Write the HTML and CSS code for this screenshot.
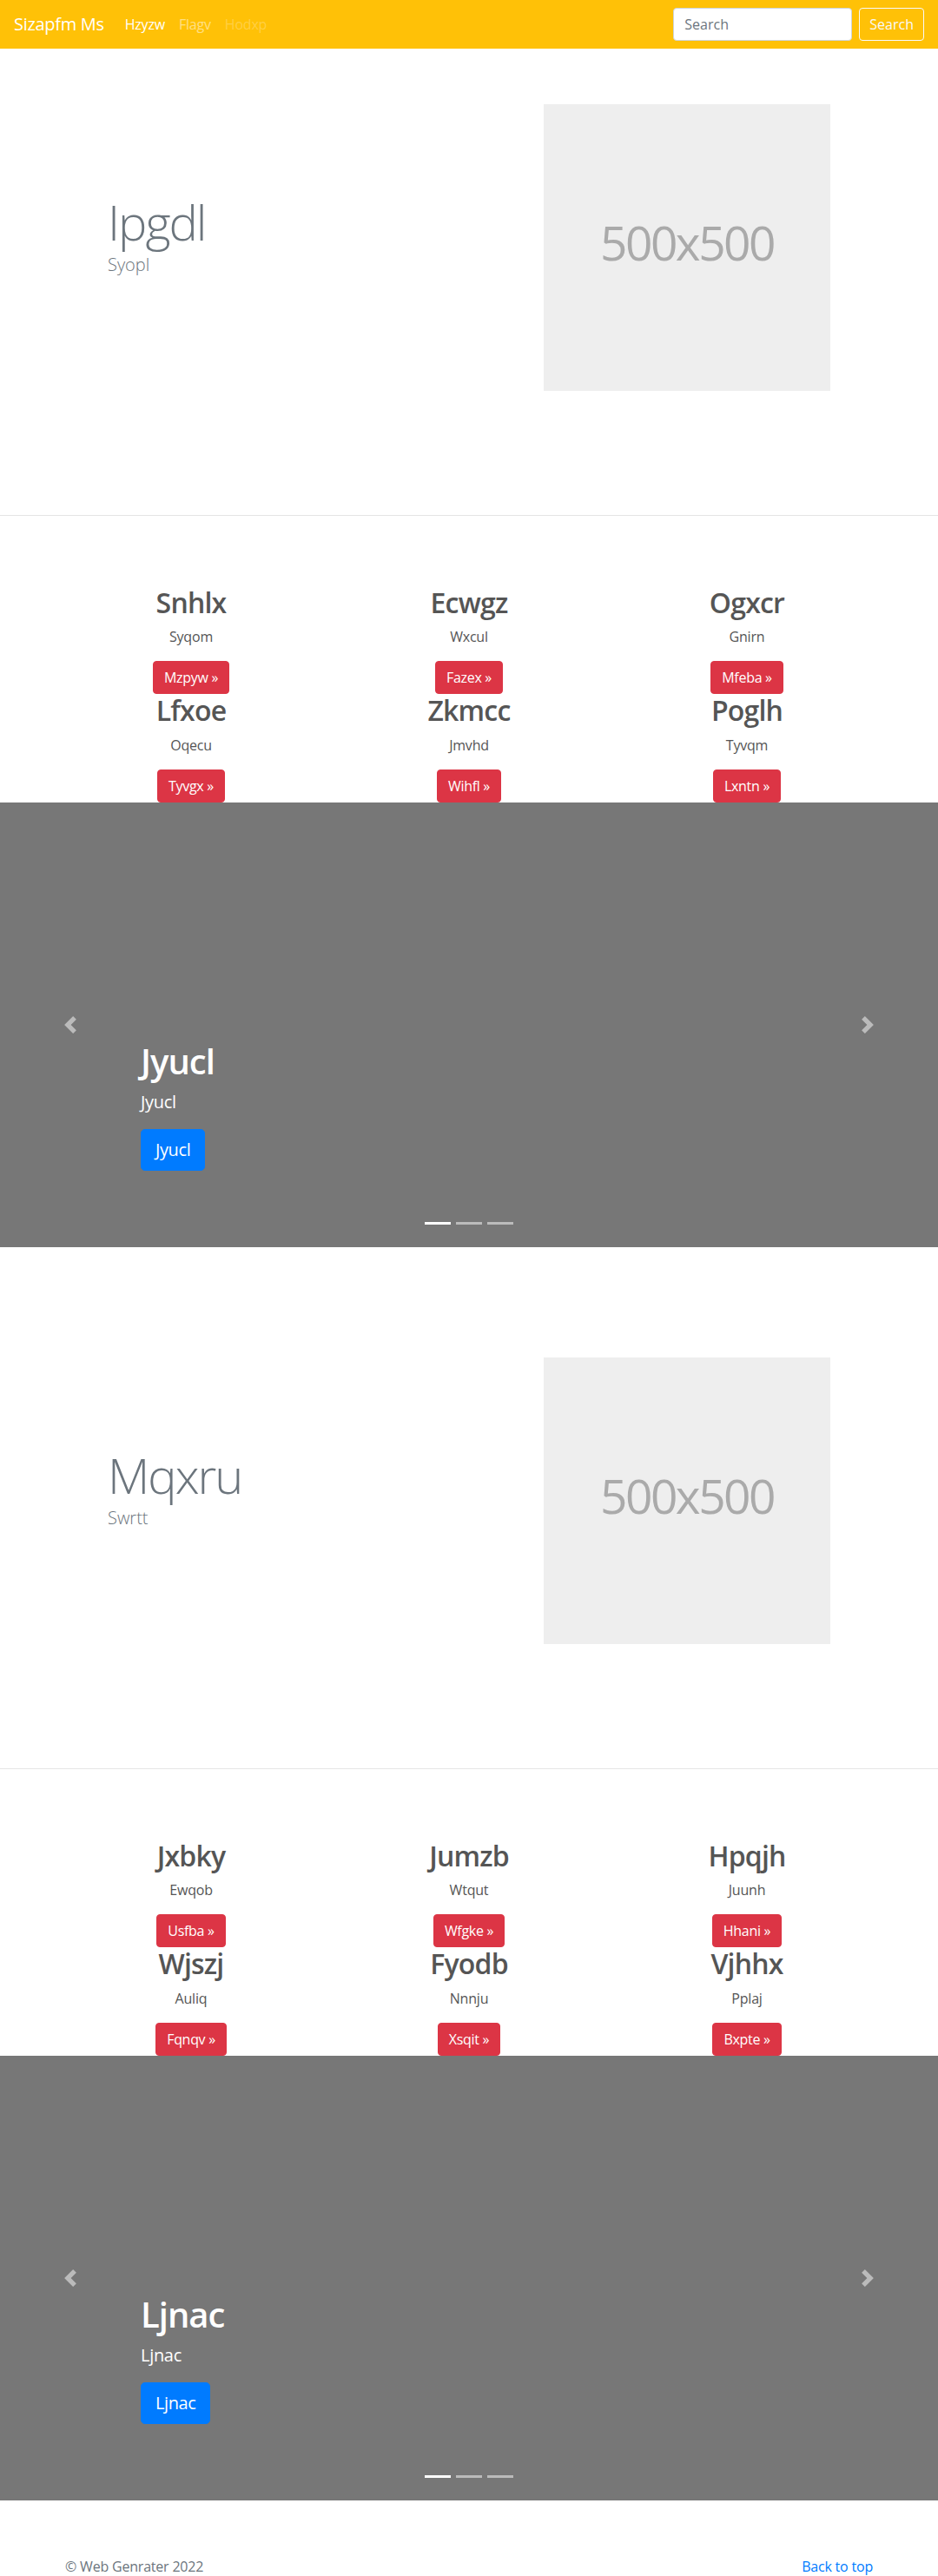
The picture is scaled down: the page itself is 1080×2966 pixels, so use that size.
FILE: index.html
```html
<!DOCTYPE html>
<html lang="en">
<head>
<meta charset="utf-8">
<title>Sizapfm Ms</title>
<link rel="stylesheet" href="styles.css">
</head>
<body>
<nav class="navbar">
  <a class="brand" href="#">Sizapfm Ms</a>
  <ul class="nav-links">
    <li><a class="nav-link active" href="#">Hzyzw</a></li>
    <li><a class="nav-link" href="#">Flagv</a></li>
    <li><a class="nav-link disabled" href="#">Hodxp</a></li>
  </ul>
  <form class="search">
    <input class="search-input" type="text" placeholder="Search">
    <button class="search-btn" type="button">Search</button>
  </form>
</nav>

<section class="hero hero-first">
  <div class="container hero-row">
    <div class="hero-text">
      <h1 class="hero-title">Ipgdl</h1>
      <p class="hero-sub">Syopl</p>
    </div>
    <div class="hero-media"><div class="placeholder">500x500</div></div>
  </div>
</section>

<section class="features">
  <div class="container feature-grid">
    <div class="feature"><h2 class="feature-title">Snhlx</h2><p class="feature-text">Syqom</p><a class="btn-danger" href="#">Mzpyw &raquo;</a></div>
    <div class="feature"><h2 class="feature-title">Ecwgz</h2><p class="feature-text">Wxcul</p><a class="btn-danger" href="#">Fazex &raquo;</a></div>
    <div class="feature"><h2 class="feature-title">Ogxcr</h2><p class="feature-text">Gnirn</p><a class="btn-danger" href="#">Mfeba &raquo;</a></div>
    <div class="feature"><h2 class="feature-title">Lfxoe</h2><p class="feature-text">Oqecu</p><a class="btn-danger" href="#">Tyvgx &raquo;</a></div>
    <div class="feature"><h2 class="feature-title">Zkmcc</h2><p class="feature-text">Jmvhd</p><a class="btn-danger" href="#">Wihfl &raquo;</a></div>
    <div class="feature"><h2 class="feature-title">Poglh</h2><p class="feature-text">Tyvqm</p><a class="btn-danger" href="#">Lxntn &raquo;</a></div>
  </div>
</section>

<section class="carousel">
  <div class="carousel-caption">
    <h1 class="caption-title">Jyucl</h1>
    <p class="caption-text">Jyucl</p>
    <a class="btn-primary-lg" href="#">Jyucl</a>
  </div>
  <a class="carousel-control prev" href="#"><svg class="control-icon" viewBox="0 0 8 8" width="20" height="20"><path fill="#fff" d="M5.25 0l-4 4 4 4 1.5-1.5L4.25 4l2.5-2.5L5.25 0z"/></svg></a>
  <a class="carousel-control next" href="#"><svg class="control-icon" viewBox="0 0 8 8" width="20" height="20"><path fill="#fff" d="M2.75 0l-1.5 1.5L3.75 4l-2.5 2.5L2.75 8l4-4-4-4z"/></svg></a>
  <ol class="indicators"><li class="indicator active"></li><li class="indicator"></li><li class="indicator"></li></ol>
</section>

<section class="hero hero-next">
  <div class="container hero-row">
    <div class="hero-text">
      <h1 class="hero-title">Mqxru</h1>
      <p class="hero-sub">Swrtt</p>
    </div>
    <div class="hero-media"><div class="placeholder">500x500</div></div>
  </div>
</section>

<section class="features">
  <div class="container feature-grid">
    <div class="feature"><h2 class="feature-title">Jxbky</h2><p class="feature-text">Ewqob</p><a class="btn-danger" href="#">Usfba &raquo;</a></div>
    <div class="feature"><h2 class="feature-title">Jumzb</h2><p class="feature-text">Wtqut</p><a class="btn-danger" href="#">Wfgke &raquo;</a></div>
    <div class="feature"><h2 class="feature-title">Hpqjh</h2><p class="feature-text">Juunh</p><a class="btn-danger" href="#">Hhani &raquo;</a></div>
    <div class="feature"><h2 class="feature-title">Wjszj</h2><p class="feature-text">Auliq</p><a class="btn-danger" href="#">Fqnqv &raquo;</a></div>
    <div class="feature"><h2 class="feature-title">Fyodb</h2><p class="feature-text">Nnnju</p><a class="btn-danger" href="#">Xsqit &raquo;</a></div>
    <div class="feature"><h2 class="feature-title">Vjhhx</h2><p class="feature-text">Pplaj</p><a class="btn-danger" href="#">Bxpte &raquo;</a></div>
  </div>
</section>

<section class="carousel">
  <div class="carousel-caption">
    <h1 class="caption-title">Ljnac</h1>
    <p class="caption-text">Ljnac</p>
    <a class="btn-primary-lg" href="#">Ljnac</a>
  </div>
  <a class="carousel-control prev" href="#"><svg class="control-icon" viewBox="0 0 8 8" width="20" height="20"><path fill="#fff" d="M5.25 0l-4 4 4 4 1.5-1.5L4.25 4l2.5-2.5L5.25 0z"/></svg></a>
  <a class="carousel-control next" href="#"><svg class="control-icon" viewBox="0 0 8 8" width="20" height="20"><path fill="#fff" d="M2.75 0l-1.5 1.5L3.75 4l-2.5 2.5L2.75 8l4-4-4-4z"/></svg></a>
  <ol class="indicators"><li class="indicator active"></li><li class="indicator"></li><li class="indicator"></li></ol>
</section>

<footer class="footer container">
  <p class="copy">&copy; Web Genrater 2022</p>
  <a class="back-top" href="#">Back to top</a>
</footer>
</body>
</html>
```

FILE: styles.css
```css
* { box-sizing: border-box; }

html, body {
  margin: 0;
  padding: 0;
}

body {
  font-family: "Open Sans", "Noto Sans", "DejaVu Sans", sans-serif;
  font-size: 16px;
  line-height: 1.5;
  color: #212529;
  background: #fff;
}

a { text-decoration: none; }

.container {
  width: 960px;
  margin: 0 auto;
}

/* Navbar */
.navbar {
  height: 56px;
  background: #ffc107;
  display: flex;
  align-items: center;
  padding: 8px 16px;
}

.brand {
  color: #fff;
  font-size: 20px;
  line-height: 30px;
  margin-right: 16px;
  letter-spacing: -0.3px;
}

.nav-links {
  list-style: none;
  margin: 0;
  padding: 0;
  display: flex;
}

.nav-link {
  display: block;
  padding: 8px;
  line-height: 24px;
  color: rgba(255, 255, 255, 0.5);
  letter-spacing: -0.2px;
}

.nav-link.active { color: #fff; }
.nav-link.disabled { color: rgba(255, 255, 255, 0.25); }

.search {
  margin-left: auto;
  display: flex;
  align-items: center;
}

.search-input {
  width: 206px;
  height: 38px;
  padding: 6px 12px;
  font-family: inherit;
  font-size: 16px;
  line-height: 24px;
  color: #495057;
  background: #fff;
  border: 1px solid #ced4da;
  border-radius: 4px;
  margin-right: 8px;
  outline: none;
}

.search-input::placeholder { color: #6c757d; }

.search-btn {
  height: 38px;
  padding: 6px 11px;
  font-family: inherit;
  font-size: 16px;
  line-height: 24px;
  color: #f8f9fa;
  background: transparent;
  border: 1px solid #f8f9fa;
  border-radius: 4px;
}

/* Hero */
.hero {
  border-bottom: 1px solid #e5e5e5;
  padding-bottom: 143px;
}

.hero-first { padding-top: 64px; }
.hero-next { padding-top: 127px; }

.hero-row {
  display: flex;
  align-items: center;
}

.hero-text {
  flex: 1;
  padding: 0 64px;
  margin-top: -31px;
}

.hero-title {
  margin: 0;
  font-size: 56px;
  font-weight: 300;
  line-height: 1.2;
  color: #6c757d;
  letter-spacing: -2px;
}

.hero-sub {
  margin: 4px 0 0;
  font-size: 20px;
  font-weight: 300;
  line-height: 1.2;
  color: #6c757d;
}

.hero-media {
  flex: 1;
  padding: 0 64px;
  display: flex;
  justify-content: flex-end;
}

.placeholder {
  width: 330px;
  height: 330px;
  background: #eee;
  color: #aaa;
  display: flex;
  align-items: center;
  justify-content: center;
  font-size: 55px;
  letter-spacing: -2.5px;
  padding-bottom: 12px;
}

/* Features */
.features {
  padding-top: 81px;
}

.feature-grid {
  display: grid;
  grid-template-columns: repeat(3, 1fr);
}

.feature {
  display: flex;
  flex-direction: column;
  align-items: center;
  text-align: center;
}

.feature-title {
  margin: 0 0 8px;
  font-size: 32px;
  font-weight: 600;
  line-height: 1.2;
  color: #555;
  letter-spacing: -0.8px;
}

.feature-text {
  margin: 0 0 16px;
  color: #555;
  line-height: 24px;
  letter-spacing: -0.2px;
}

.btn-danger {
  display: inline-block;
  padding: 6px 12px;
  line-height: 24px;
  color: #fff;
  background: #dc3545;
  border: 1px solid #dc3545;
  border-radius: 4px;
  letter-spacing: -0.3px;
}

/* Carousel */
.carousel {
  position: relative;
  height: 512px;
  background: #777;
  display: flex;
  flex-direction: column;
  justify-content: flex-end;
  padding: 0 162px 88px;
}

.carousel-caption {
  display: flex;
  flex-direction: column;
  align-items: flex-start;
  color: #fff;
}

.caption-title {
  margin: 0 0 8px;
  font-size: 40px;
  font-weight: 600;
  line-height: 1.2;
  letter-spacing: -1px;
}

.caption-text {
  margin: 0 0 16px;
  font-size: 20px;
  line-height: 30px;
  letter-spacing: -0.3px;
}

.btn-primary-lg {
  display: inline-block;
  padding: 8px 16px;
  font-size: 20px;
  line-height: 30px;
  color: #fff;
  background: #007bff;
  border: 1px solid #007bff;
  border-radius: 4.8px;
  letter-spacing: -0.4px;
}

.carousel-control {
  position: absolute;
  top: 0;
  bottom: 0;
  width: 15%;
  display: flex;
  align-items: center;
  justify-content: center;
  opacity: 0.5;
}

.carousel-control.prev { left: 0; }
.carousel-control.next { right: 0; }

.control-icon { display: block; }

.indicators {
  position: absolute;
  left: 0;
  right: 0;
  bottom: 16px;
  margin: 0;
  padding: 0;
  list-style: none;
  display: flex;
  justify-content: center;
}

.indicator {
  width: 30px;
  height: 3px;
  margin: 10px 3px;
  background: #fff;
  opacity: 0.5;
}

.indicator.active { opacity: 1; }

/* Footer */
.footer {
  display: flex;
  justify-content: space-between;
  align-items: flex-start;
  padding: 64px 15px 0;
}

.copy {
  margin: 0;
  color: #6c757d;
  letter-spacing: -0.2px;
}

.back-top {
  color: #007bff;
  letter-spacing: -0.2px;
}
```
